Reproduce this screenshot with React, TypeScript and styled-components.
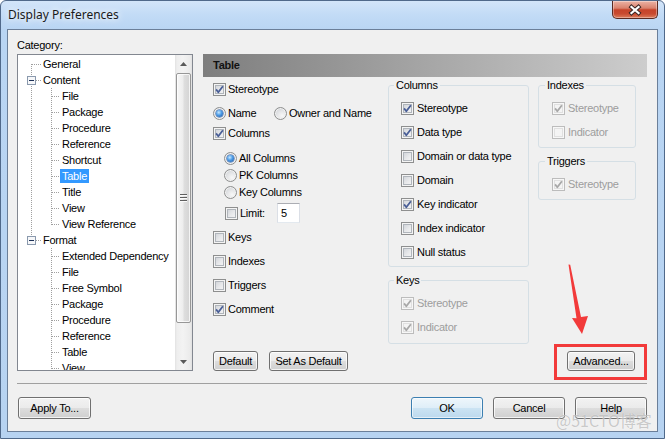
import React from 'react';
import styled, { createGlobalStyle } from 'styled-components';

const GlobalStyle = createGlobalStyle`
  html, body { margin: 0; padding: 0; background: #ffffff; }
  body { width: 665px; height: 439px; overflow: hidden; }
  *, *::before, *::after { box-sizing: border-box; }
`;

const FONT = `"Liberation Sans", Arial, sans-serif`;
const DOT = '#a0a0a0';

const Window = styled.div`
  position: relative;
  width: 665px;
  height: 439px;
  display: flex;
  flex-direction: column;
  border: 1px solid #50698a;
  border-radius: 6px 6px 0 0;
  background: linear-gradient(to bottom, #d3e5f9 0px, #c2dbf6 14px, #b9d5f3 29px, #b7d3f1 100%);
  overflow: hidden;
  font-family: ${FONT};
  font-size: 11px;
  letter-spacing: -0.25px;
  color: #000;
`;

const TitleBar = styled.div`
  height: 28px;
  flex: none;
  display: flex;
  align-items: flex-start;
  justify-content: space-between;
  padding: 0 6px 0 7px;
`;

const Title = styled.div`
  margin-top: 6px;
  font-family: "Noto Sans", "Liberation Sans", sans-serif;
  font-size: 12px;
  letter-spacing: 0;
  line-height: 16px;
  color: #1a1a1a;
  text-shadow: 0 0 6px #fff, 0 0 10px rgba(255, 255, 255, 0.9);
`;

const CloseButton = styled.div`
  width: 46px;
  height: 18px;
  display: flex;
  align-items: center;
  justify-content: center;
  border: 1px solid #5a2a22;
  border-top: none;
  border-radius: 0 0 5px 5px;
  background: linear-gradient(to bottom, #ebb3a5 0%, #d9826e 42%, #c6432a 52%, #c84a30 75%, #dc7c5c 100%);
  box-shadow: inset 0 0 0 1px rgba(255, 255, 255, 0.35);
`;

const Client = styled.div`
  margin: 0 6px;
  height: 403px;
  flex: none;
  border: 1px solid #6b7f99;
  background: #f0f0f0;
  display: flex;
  flex-direction: column;
`;

const Body = styled.div`
  display: grid;
  grid-template-columns: 176px 444px;
  grid-template-rows: 24px 317px;
  column-gap: 10px;
  padding-left: 9px;
`;

const CategoryLabel = styled.div`
  grid-column: 1;
  grid-row: 1;
  padding-top: 9px;
  line-height: 13px;
`;

const TreeBox = styled.div`
  grid-column: 1;
  grid-row: 2;
  display: flex;
  border: 1px solid #828790;
  background: #ffffff;
`;

const TreeList = styled.div`
  flex: 1;
  overflow: hidden;
  padding-top: 1px;
`;

const TreeRow = styled.div`
  height: 16px;
  display: flex;
  align-items: center;
  white-space: nowrap;
  & > svg { flex: none; display: block; }
`;

const TreeLabel = styled.span<{ $selected?: boolean }>`
  height: 14px;
  line-height: 14px;
  padding: 0 2px;
  background: ${(p) => (p.$selected ? '#3399ff' : 'transparent')};
  color: ${(p) => (p.$selected ? '#ffffff' : '#000000')};
`;

const ScrollBar = styled.div`
  width: 17px;
  flex: none;
  display: flex;
  flex-direction: column;
  background: linear-gradient(to right, #e2e2e2 0px, #eeeeee 2px, #f3f3f3 8px, #ebebeb 15px, #e0e0e0 17px);
`;

const ScrollArrow = styled.div`
  height: 17px;
  flex: none;
  display: flex;
  align-items: center;
  justify-content: center;
`;

const ScrollTrack = styled.div`
  flex: 1;
  padding: 1px 1px 0 1px;
`;

const ScrollThumb = styled.div`
  height: 250px;
  border: 1px solid #979797;
  border-radius: 2px;
  background: linear-gradient(to right, #f7f7f7 0%, #ededed 45%, #dedede 55%, #d3d3d3 100%);
  box-shadow: inset 0 0 0 1px rgba(255, 255, 255, 0.75);
  display: flex;
  align-items: center;
  justify-content: center;
`;

const Grip = styled.span`
  width: 7px;
  height: 8px;
  background: repeating-linear-gradient(to bottom, #5f5f5f 0 1px, #fafafa 1px 2px, transparent 2px 3px);
`;

const Panel = styled.section`
  grid-column: 2;
  grid-row: 2;
  display: flex;
  flex-direction: column;
`;

const PanelHeader = styled.div`
  height: 23px;
  flex: none;
  line-height: 23px;
  padding-left: 10px;
  font-weight: bold;
  color: #111111;
  background: linear-gradient(to right, #7e7e7e, #cdcdcd);
`;

const PanelBody = styled.div`
  flex: 1;
  display: flex;
`;

const ColA = styled.div`
  width: 185px;
  flex: none;
  padding-left: 10px;
  display: flex;
  flex-direction: column;
`;

const ColB = styled.div`
  width: 141px;
  flex: none;
  display: flex;
  flex-direction: column;
`;

const ColC = styled.div`
  width: 98px;
  flex: none;
  margin-left: 9px;
  display: flex;
  flex-direction: column;
`;

const OptRow = styled.div<{ $mt?: number; $indent?: number; $h?: number; $gap?: number }>`
  display: flex;
  align-items: center;
  gap: ${(p) => p.$gap ?? 2}px;
  height: ${(p) => p.$h ?? 16}px;
  margin-top: ${(p) => p.$mt ?? 0}px;
  padding-left: ${(p) => p.$indent ?? 0}px;
  white-space: nowrap;
`;

const RadioOption = styled.div<{ $w?: number }>`
  display: flex;
  align-items: center;
  gap: 2px;
  width: ${(p) => (p.$w ? `${p.$w}px` : 'auto')};
`;

const OptText = styled.span<{ $disabled?: boolean }>`
  color: ${(p) => (p.$disabled ? '#9d9d9d' : '#000000')};
  line-height: 13px;
`;

const LimitLabel = styled.span`
  width: 35px;
  line-height: 13px;
`;

const NumField = styled.span`
  width: 23px;
  height: 20px;
  line-height: 18px;
  padding-left: 3px;
  background: #ffffff;
  border: 1px solid #e3e9ef;
  border-top-color: #abadb3;
  border-left-color: #dbdfe6;
  border-right-color: #dbdfe6;
`;

const GroupBox = styled.div<{ $mt: number; $pb: number; $pl: number }>`
  margin-top: ${(p) => p.$mt}px;
  border: 1px solid #d5dfe5;
  border-radius: 3px;
  padding: 0 0 ${(p) => p.$pb}px ${(p) => p.$pl}px;
`;

const Legend = styled.div`
  width: fit-content;
  margin: -7px 0 4px -7px;
  padding: 0 2px;
  line-height: 13px;
  background: #f0f0f0;
`;

const GroupRow = styled.div`
  height: 24px;
  display: flex;
  align-items: center;
  gap: 3px;
  white-space: nowrap;
`;

const BoxFrame = styled.span<{ $disabled?: boolean }>`
  flex: none;
  width: 13px;
  height: 13px;
  border: 1px solid ${(p) => (p.$disabled ? '#bcbcbc' : '#8e8f8f')};
  background: ${(p) =>
    p.$disabled ? '#f4f4f4' : 'linear-gradient(135deg, #c9cdd3 0%, #e8e9eb 55%, #f8f8f8 100%)'};
  box-shadow: inset 0 0 0 1px ${(p) => (p.$disabled ? '#f7f7f7' : '#f4f4f4')},
    inset 0 0 0 2px ${(p) => (p.$disabled ? '#e0e0e0' : '#b0b5bb')};
  display: flex;
  align-items: center;
  justify-content: center;
  & > svg { display: block; }
`;

const RadioDot = styled.span<{ $on?: boolean }>`
  flex: none;
  width: 13px;
  height: 13px;
  border-radius: 50%;
  border: 1px solid #8e8f8f;
  background: radial-gradient(circle at 65% 70%, #f8f8f8 0%, #e4e5e7 45%, #c6c9ce 100%);
  box-shadow: inset 0 0 0 1px #f2f2f2;
  display: flex;
  align-items: center;
  justify-content: center;
  &::after {
    content: '';
    width: 7px;
    height: 7px;
    border-radius: 50%;
    display: ${(p) => (p.$on ? 'block' : 'none')};
    background: radial-gradient(circle at 40% 35%, #c8e8ff 0%, #4b9be6 45%, #1d4f9a 100%);
    box-shadow: 0 0 0 0.5px #2b5ca4;
  }
`;

const PanelFooter = styled.div`
  height: 20px;
  flex: none;
  display: flex;
  align-items: center;
  gap: 11px;
  padding: 0 12px 0 10px;
`;

const Spacer = styled.div`
  flex: 1;
`;

const Button = styled.button<{ $w: number; $h?: number; $primary?: boolean }>`
  flex: none;
  width: ${(p) => p.$w}px;
  height: ${(p) => p.$h ?? 20}px;
  padding: 0;
  font-family: ${FONT};
  font-size: 11px;
  letter-spacing: -0.25px;
  color: #000000;
  border: 1px solid ${(p) => (p.$primary ? '#3c7fb1' : '#707070')};
  border-radius: 3px;
  background: ${(p) =>
    p.$primary
      ? 'linear-gradient(to bottom, #eef6fb 0%, #dfeef8 48%, #cbe3f3 52%, #bcd9ee 100%)'
      : 'linear-gradient(to bottom, #f2f2f2 0%, #ebebeb 48%, #dddddd 52%, #cfcfcf 100%)'};
  box-shadow: inset 0 0 0 1px ${(p) => (p.$primary ? 'rgba(255,255,255,0.6)' : 'rgba(255,255,255,0.75)')};
`;

const Separator = styled.div`
  width: 630px;
  height: 1px;
  margin: 12px 0 0 9px;
  background: #a0a0a0;
`;

const Footer = styled.div`
  display: flex;
  align-items: center;
  gap: 10px;
  padding: 0 10px;
  margin-top: 13px;
`;

const Watermark = styled.div`
  position: absolute;
  left: 555px;
  top: 407px;
  font-family: "Noto Sans CJK SC", "Noto Sans", sans-serif;
  font-size: 16px;
  letter-spacing: 0;
  color: rgba(140, 140, 140, 0.45);
  text-shadow: 0 0 1px rgba(255, 255, 255, 0.8);
  pointer-events: none;
`;

const Highlight = styled.div`
  position: absolute;
  left: 553px;
  top: 343px;
  width: 93px;
  height: 36px;
  border: 3px solid #f23a3a;
  pointer-events: none;
`;

const ArrowMark = styled.svg`
  position: absolute;
  left: 565px;
  top: 262px;
  pointer-events: none;
`;

type TreeNode = {
  label: string;
  level: 0 | 1;
  root?: 'down' | 'full' | 'up';
  rootCont?: boolean;
  child?: 'full' | 'up';
  expander?: boolean;
  selected?: boolean;
};

const content = ['File', 'Package', 'Procedure', 'Reference', 'Shortcut', 'Table', 'Title', 'View', 'View Reference'];
const format = ['Extended Dependency', 'File', 'Free Symbol', 'Package', 'Procedure', 'Reference', 'Table', 'View'];

const treeNodes: TreeNode[] = [
  { label: 'General', level: 0, root: 'down' },
  { label: 'Content', level: 0, root: 'full', expander: true },
  ...content.map((l, i) => ({
    label: l,
    level: 1 as const,
    rootCont: true,
    child: (i === content.length - 1 ? 'up' : 'full') as 'up' | 'full',
    selected: l === 'Table',
  })),
  { label: 'Format', level: 0, root: 'up', expander: true },
  ...format.map((l) => ({ label: l, level: 1 as const, rootCont: false, child: 'full' as const })),
];

function Gutter({ node }: { node: TreeNode }) {
  if (node.level === 0) {
    const y0 = node.root === 'down' ? 8 : 0;
    const y1 = node.root === 'up' ? 9 : 16;
    return (
      <svg width="23" height="16" shapeRendering="crispEdges">
        <line x1="13.5" y1={y0} x2="13.5" y2={y1} stroke={DOT} strokeDasharray="1 1" />
        <line x1={node.expander ? 18 : 14} y1="8.5" x2="23" y2="8.5" stroke={DOT} strokeDasharray="1 1" />
        {node.expander && (
          <>
            <rect x="9.5" y="4.5" width="8" height="8" fill="#f6f7f9" stroke="#8a99ad" />
            <line x1="11" y1="8.5" x2="16" y2="8.5" stroke="#1b2f55" />
          </>
        )}
      </svg>
    );
  }
  return (
    <svg width="42" height="16" shapeRendering="crispEdges">
      {node.rootCont && <line x1="13.5" y1="0" x2="13.5" y2="16" stroke={DOT} strokeDasharray="1 1" />}
      <line x1="33.5" y1="0" x2="33.5" y2={node.child === 'up' ? 9 : 16} stroke={DOT} strokeDasharray="1 1" />
      <line x1="34" y1="8.5" x2="42" y2="8.5" stroke={DOT} strokeDasharray="1 1" />
    </svg>
  );
}

function CheckBox({ checked, disabled }: { checked?: boolean; disabled?: boolean }) {
  return (
    <BoxFrame $disabled={disabled}>
      {checked && (
        <svg width="11" height="11" viewBox="0 0 11 11">
          <path
            d="M2.1 5.4 L4.3 8.2 L8.9 2.2"
            fill="none"
            stroke={disabled ? '#a8a8a8' : '#4a5f97'}
            strokeWidth="1.8"
            strokeLinejoin="round"
          />
        </svg>
      )}
    </BoxFrame>
  );
}

function Check({ label, checked, disabled, mt, indent }: { label: string; checked?: boolean; disabled?: boolean; mt?: number; indent?: number }) {
  return (
    <OptRow $mt={mt} $indent={indent}>
      <CheckBox checked={checked} disabled={disabled} />
      <OptText $disabled={disabled}>{label}</OptText>
    </OptRow>
  );
}

function Radio({ label, on, mt, indent }: { label: string; on?: boolean; mt?: number; indent?: number }) {
  return (
    <OptRow $mt={mt} $indent={indent}>
      <RadioDot $on={on} />
      <OptText>{label}</OptText>
    </OptRow>
  );
}

function GroupCheck({ label, checked, disabled }: { label: string; checked?: boolean; disabled?: boolean }) {
  return (
    <GroupRow>
      <CheckBox checked={checked} disabled={disabled} />
      <OptText $disabled={disabled}>{label}</OptText>
    </GroupRow>
  );
}

export default function App() {
  return (
    <>
      <GlobalStyle />
      <Window>
        <TitleBar>
          <Title>Display Preferences</Title>
          <CloseButton>
            <svg width="14" height="12" viewBox="0 0 14 12">
              <path d="M3.5 3 L10.5 9 M10.5 3 L3.5 9" stroke="#3a2624" strokeWidth="4.2" strokeLinecap="square" />
              <path d="M3.5 3 L10.5 9 M10.5 3 L3.5 9" stroke="#ffffff" strokeWidth="2.3" strokeLinecap="square" />
            </svg>
          </CloseButton>
        </TitleBar>

        <Client>
          <Body>
            <CategoryLabel>Category:</CategoryLabel>
            <TreeBox>
              <TreeList>
                {treeNodes.map((n, i) => (
                  <TreeRow key={i}>
                    <Gutter node={n} />
                    <TreeLabel $selected={n.selected}>{n.label}</TreeLabel>
                  </TreeRow>
                ))}
              </TreeList>
              <ScrollBar>
                <ScrollArrow>
                  <svg width="7" height="4" viewBox="0 0 7 4">
                    <polygon points="3.5,0 7,4 0,4" fill="#5a5a5a" />
                  </svg>
                </ScrollArrow>
                <ScrollTrack>
                  <ScrollThumb>
                    <Grip />
                  </ScrollThumb>
                </ScrollTrack>
                <ScrollArrow>
                  <svg width="7" height="4" viewBox="0 0 7 4">
                    <polygon points="0,0 7,0 3.5,4" fill="#5a5a5a" />
                  </svg>
                </ScrollArrow>
              </ScrollBar>
            </TreeBox>

            <Panel>
              <PanelHeader>Table</PanelHeader>
              <PanelBody>
                <ColA>
                  <Check label="Stereotype" checked mt={4} />
                  <OptRow $mt={8}>
                    <RadioOption $w={59}>
                      <RadioDot $on />
                      <OptText>Name</OptText>
                    </RadioOption>
                    <RadioOption>
                      <RadioDot />
                      <OptText>Owner and Name</OptText>
                    </RadioOption>
                  </OptRow>
                  <Check label="Columns" checked mt={4} />
                  <Radio label="All Columns" on mt={9} indent={11} />
                  <Radio label="PK Columns" mt={1} indent={11} />
                  <Radio label="Key Columns" mt={1} indent={11} />
                  <OptRow $mt={3} $h={20} $indent={12}>
                    <CheckBox />
                    <LimitLabel>Limit:</LimitLabel>
                    <NumField>5</NumField>
                  </OptRow>
                  <Check label="Keys" mt={6} />
                  <Check label="Indexes" mt={8} />
                  <Check label="Triggers" mt={8} />
                  <Check label="Comment" checked mt={8} />
                </ColA>

                <ColB>
                  <GroupBox $mt={8} $pb={2} $pl={12}>
                    <Legend>Columns</Legend>
                    <GroupCheck label="Stereotype" checked />
                    <GroupCheck label="Data type" checked />
                    <GroupCheck label="Domain or data type" />
                    <GroupCheck label="Domain" />
                    <GroupCheck label="Key indicator" checked />
                    <GroupCheck label="Index indicator" />
                    <GroupCheck label="Null status" />
                  </GroupBox>
                  <GroupBox $mt={13} $pb={4} $pl={12}>
                    <Legend>Keys</Legend>
                    <GroupCheck label="Stereotype" checked disabled />
                    <GroupCheck label="Indicator" checked disabled />
                  </GroupBox>
                </ColB>

                <ColC>
                  <GroupBox $mt={8} $pb={3} $pl={13}>
                    <Legend>Indexes</Legend>
                    <GroupCheck label="Stereotype" checked disabled />
                    <GroupCheck label="Indicator" disabled />
                  </GroupBox>
                  <GroupBox $mt={13} $pb={3} $pl={13}>
                    <Legend>Triggers</Legend>
                    <GroupCheck label="Stereotype" checked disabled />
                  </GroupBox>
                </ColC>
              </PanelBody>
              <PanelFooter>
                <Button $w={45}>Default</Button>
                <Button $w={79}>Set As Default</Button>
                <Spacer />
                <Button $w={68}>Advanced...</Button>
              </PanelFooter>
            </Panel>
          </Body>

          <Separator />

          <Footer>
            <Button $w={73} $h={22}>Apply To...</Button>
            <Spacer />
            <Button $w={72} $h={22} $primary>OK</Button>
            <Button $w={72} $h={22}>Cancel</Button>
            <Button $w={72} $h={22}>Help</Button>
          </Footer>
        </Client>

        <Watermark>@51CTO博客</Watermark>
        <Highlight />
        <ArrowMark width="24" height="74" viewBox="0 0 24 74">
          <polygon
            points="2.5,1.5 4.2,1.8 15,54 22,53 16,71 6,55 10.5,55.2"
            fill="#f23a3a"
          />
        </ArrowMark>
      </Window>
    </>
  );
}
